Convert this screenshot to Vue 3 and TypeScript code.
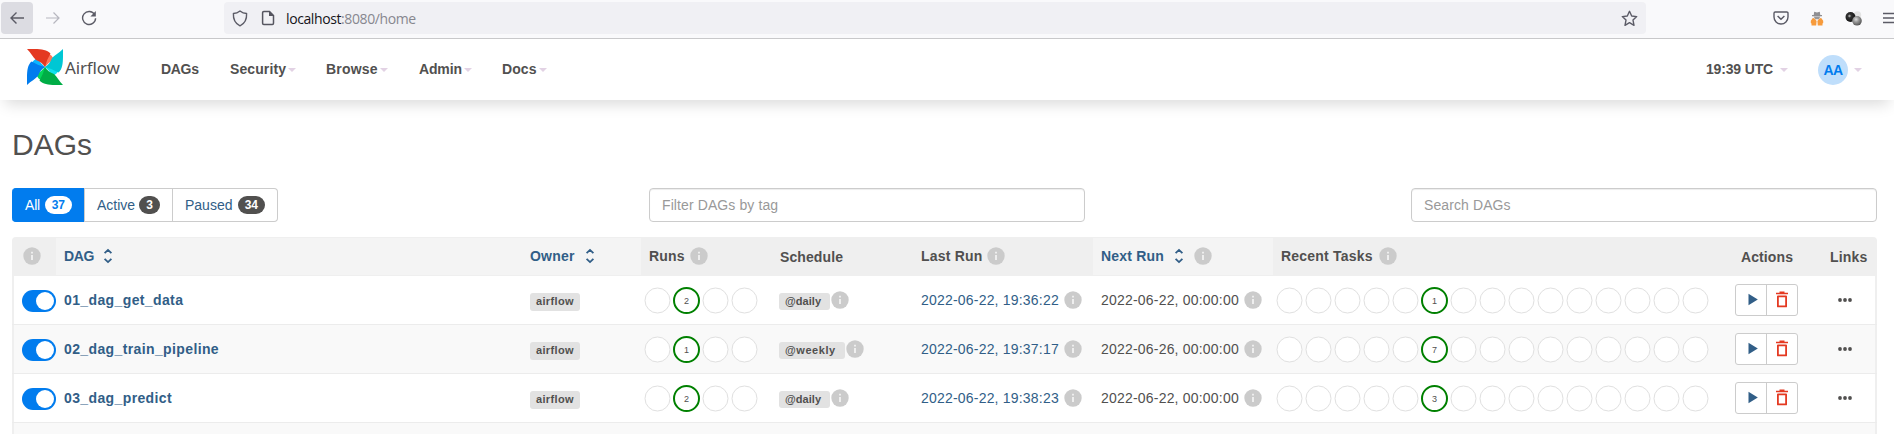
<script setup lang="ts">
import { defineComponent, h } from 'vue'

interface Dag {
  name: string
  runs: number
  schedule: string
  last: string
  next: string
  tasks: number
}

interface Blade {
  angle: number
  dark: string
  light: string
}

const dags: Dag[] = [
  { name: '01_dag_get_data', runs: 2, schedule: 'daily', last: '2022-06-22, 19:36:22', next: '2022-06-22, 00:00:00', tasks: 1 },
  { name: '02_dag_train_pipeline', runs: 1, schedule: 'weekly', last: '2022-06-22, 19:37:17', next: '2022-06-26, 00:00:00', tasks: 7 },
  { name: '03_dag_predict', runs: 2, schedule: 'daily', last: '2022-06-22, 19:38:23', next: '2022-06-22, 00:00:00', tasks: 3 },
]

const menus: string[] = ['Security', 'Browse', 'Admin', 'Docs']

const blades: Blade[] = [
  { angle: 0, dark: '#e43921', light: '#ff7557' },
  { angle: 90, dark: '#00c7d4', light: '#11e1ee' },
  { angle: 180, dark: '#00ad46', light: '#04d659' },
  { angle: 270, dark: '#017cee', light: '#0cb6ff' },
]

const InfoIcon = defineComponent({
  render: () =>
    h('svg', { width: 18, height: 18, viewBox: '0 0 18 18', style: 'display:block;flex:none' }, [
      h('circle', { cx: 9, cy: 9, r: 8.7, fill: '#cbcbcb' }),
      h('path', { d: 'M8.1 4.8h1.8v1.8H8.1zM8.1 8h1.8v5H8.1z', fill: '#f2f2f2' }),
    ]),
})

const SortIcon = defineComponent({
  render: () =>
    h('svg', { width: 10, height: 16, viewBox: '0 0 10 16', style: 'display:block;flex:none' }, [
      h('path', { d: 'M1.6 5.2 5 1.9l3.4 3.3M1.6 10.8 5 14.1l3.4-3.3', fill: 'none', stroke: '#315e87', 'stroke-width': 1.8 }),
    ]),
})
</script>

<template>
  <div class="page">
    <div class="browser">
      <div class="back">
        <svg width="16" height="16" viewBox="0 0 16 16"><path d="M15 8H2M7.500 2.500 2 8l5.500 5.500" fill="none" stroke="#5b5b66" stroke-width="1.400" /></svg>
      </div>
      <svg class="fwd" width="16" height="16" viewBox="0 0 16 16"><path d="M1 8h13M8.500 2.500 14 8l-5.500 5.500" fill="none" stroke="#b7b7bf" stroke-width="1.200" /></svg>
      <svg class="reload" width="16" height="16" viewBox="0 0 16 16"><path d="M13.600 4.500A6.500 6.500 0 1 0 14.600 8.200" fill="none" stroke="#5b5b66" stroke-width="1.400" /><path d="M14.800 1v5.400H9.400z" fill="#5b5b66" /></svg>
      <div class="url">
        <svg width="16" height="17" viewBox="0 0 16 17"><path d="M8 1C6 2.600 3.700 3.400 1.400 3.500 1.100 9 3.500 13.700 8 15.800c4.500-2.100 6.900-6.800 6.600-12.300C12.300 3.400 10 2.600 8 1z" fill="none" stroke="#5b5b66" stroke-width="1.400" stroke-linejoin="round" /></svg>
        <svg class="doc" width="14" height="16" viewBox="0 0 14 16"><path d="M2.800 1.500h5.700L12.500 5.500v7.800a1.200 1.200 0 0 1-1.200 1.200H2.800a1.200 1.200 0 0 1-1.200-1.200V2.700a1.200 1.200 0 0 1 1.200-1.200z" fill="none" stroke="#55555f" stroke-width="1.500" /><path d="M8 1v5h5z" fill="#55555f" /></svg>
        <span class="address"><b>localhost</b>:8080/home</span>
        <svg class="star" width="17" height="17" viewBox="0 0 17 17"><path d="m8.500 1.300 2.200 4.700 5 .6-3.700 3.500 1 5.200-4.500-2.600L4 15.300l1-5.200L1.300 6.600l5-.6z" fill="none" stroke="#5b5b66" stroke-width="1.400" stroke-linejoin="round" /></svg>
      </div>
      <div class="extensions">
        <svg width="16" height="14" viewBox="0 0 16 14"><path d="M2.200 1h11.600a1.200 1.200 0 0 1 1.200 1.200V6A7 7 0 0 1 1 6V2.200A1.200 1.200 0 0 1 2.200 1z" fill="none" stroke="#5b5b66" stroke-width="1.400" /><path d="M4.600 5 8 8.200 11.400 5" fill="none" stroke="#5b5b66" stroke-width="1.500" /></svg>
        <svg width="14" height="15" viewBox="0 0 14 15"><path d="M4.200.8 7 1.400 9.800.8l.5 3.200H12v1.300H2V4h1.700z" fill="#8f8f92" /><path d="M3.700 5.500h6.600L9 8.300H5z" fill="#99999b" /><path d="M3 6.800 5 8l1.600 2L6.200 14.500H1.500v-2L.8 12v-2.200zM11 6.800 9 8l-1.600 2 .4 4.500h4.700v-2l.7-.5v-2.200z" fill="#f79b3c" /></svg>
        <svg width="17" height="15" viewBox="0 0 17 15">
          <defs>
            <radialGradient id="ballDark" cx=".4" cy=".4" r=".6"><stop offset="0" stop-color="#ccc" /><stop offset=".3" stop-color="#333" /><stop offset="1" stop-color="#111" /></radialGradient>
            <radialGradient id="ballGray" cx=".4" cy=".35" r=".7"><stop offset="0" stop-color="#ddd" /><stop offset=".4" stop-color="#999" /><stop offset="1" stop-color="#4c4c4c" /></radialGradient>
          </defs>
          <circle cx="12.500" cy="4" r="3.700" fill="#e4e4e4" /><circle cx="5.500" cy="6" r="5" fill="url(#ballDark)" /><circle cx="12" cy="9.800" r="4.800" fill="url(#ballGray)" />
        </svg>
        <svg width="16" height="12" viewBox="0 0 16 12"><path d="M0 1.500h16M0 6h16M0 10.500h16" stroke="#5b5b66" stroke-width="1.300" /></svg>
      </div>
    </div>

    <nav class="navbar">
      <svg class="logo" width="36" height="36" viewBox="-18 -18 36 36">
        <g v-for="b in blades" :key="b.angle" :transform="`rotate(${b.angle})`">
          <path d="M2-14Q8-12 8.500-7Q4-5 0 0L-2-6z" :fill="b.light" />
        </g>
        <g v-for="b in blades" :key="b.dark" :transform="`rotate(${b.angle})`">
          <path d="M-18-18C-7-18 1-18.500 5.500-13.500Q2-8 0 0Q-3-5-9-7C-12-9.500-14-14-18-18z" :fill="b.dark" />
        </g>
      </svg>
      <span class="brand">Airflow</span>
      <div class="menu">
        <a class="item dags">DAGs</a>
        <a v-for="m in menus" :key="m" class="item" :class="m.toLowerCase()">{{ m }}<i class="caret" /></a>
      </div>
      <a class="item clock">19:39 UTC<i class="caret" /></a>
      <a class="item user"><span class="avatar">AA</span><i class="caret" /></a>
    </nav>

    <main>
      <h2>DAGs</h2>
      <div class="filters">
        <div class="group">
          <a class="all">All<span class="badge">37</span></a>
          <a class="active">Active<span class="badge">3</span></a>
          <a class="paused">Paused<span class="badge">34</span></a>
        </div>
        <input class="tags" type="text" placeholder="Filter DAGs by tag">
        <input class="search" type="text" placeholder="Search DAGs">
      </div>

      <div class="table">
        <div class="row head">
          <div class="c-info"><InfoIcon /></div>
          <div class="sortable"><span class="t-dag">DAG</span><SortIcon /></div>
          <div class="sortable"><span class="t-owner">Owner</span><SortIcon /></div>
          <div><span class="t-runs">Runs</span><InfoIcon /></div>
          <div class="low t-schedule">Schedule</div>
          <div><span class="t-last">Last Run</span><InfoIcon /></div>
          <div class="sortable"><span class="t-next">Next Run</span><SortIcon /><span class="gap" /><InfoIcon /></div>
          <div><span class="t-recent">Recent Tasks</span><InfoIcon /></div>
          <div class="low c-actions">Actions</div>
          <div class="low">Links</div>
        </div>
        <div v-for="d in dags" :key="d.name" class="row body">
          <div class="c-toggle"><span class="toggle"><i /></span></div>
          <div class="name">{{ d.name }}</div>
          <div><span class="label owner">airflow</span></div>
          <div class="c-circles">
            <svg width="118" height="29" viewBox="0 0 118 29">
              <circle v-for="i in 4" :key="i" :cx="i * 29 - 14.5" cy="14.500" r="12.500" :class="i === 2 ? 'done' : 'none'" />
              <text x="43.500" y="17.700">{{ d.runs }}</text>
            </svg>
          </div>
          <div class="c-schedule"><span class="label sched" :class="d.schedule">@{{ d.schedule }}</span><InfoIcon /></div>
          <div class="date link"><span>{{ d.last }}</span><InfoIcon /></div>
          <div class="date"><span>{{ d.next }}</span><InfoIcon /></div>
          <div class="c-circles tasks">
            <svg width="436" height="29" viewBox="0 0 436 29">
              <circle v-for="i in 15" :key="i" :cx="i * 29 - 14.5" cy="14.500" r="12.500" :class="i === 6 ? 'done' : 'none'" />
              <text x="159.500" y="17.700">{{ d.tasks }}</text>
            </svg>
          </div>
          <div class="c-buttons">
            <span class="actions">
              <a><svg width="10" height="13" viewBox="0 0 10 13"><path d="M.5.800v11.400L9.800 6.500z" fill="#315e87" /></svg></a>
              <a><svg width="14" height="17" viewBox="0 0 14 17"><path d="M1 2.400h12M4.500 1.300h5" fill="none" stroke="#e43921" stroke-width="1.500" /><path d="M2.900 5.400h8.200v10H2.900z" fill="none" stroke="#e43921" stroke-width="1.800" stroke-linejoin="round" /></svg></a>
            </span>
          </div>
          <div class="c-links"><svg width="16" height="6" viewBox="0 0 16 6"><g fill="#51504f"><circle cx="3" cy="3" r="1.900" /><circle cx="8" cy="3" r="1.900" /><circle cx="13" cy="3" r="1.900" /></g></svg></div>
        </div>
        <div class="row body" />
      </div>
    </main>
  </div>
</template>

<style>
body { margin: 0; overflow: hidden; }
</style>

<style scoped>
.page { width: 1894px; height: 434px; overflow: hidden; background: #fff; color: #51504f; font: 14px/20px "Liberation Sans", Arial, sans-serif; }
.page * { box-sizing: border-box; }
svg { display: block; flex: none; }

.browser { height: 39px; background: #f9f9fb; border-bottom: 1px solid #c8c8ca; display: flex; align-items: center; padding: 0 0 2px 1px; overflow: hidden; }
.back { width: 32px; height: 32px; border-radius: 4px; background: #dcdce2; display: flex; align-items: center; justify-content: center; flex: none; }
.fwd { margin-left: 12px; }
.reload { margin: 0 127px 0 20px; }
.url { width: 1422px; height: 32px; border-radius: 4px; background: #f0f0f4; display: flex; align-items: center; padding-left: 8px; flex: none; }
.address { margin: 2px 0 0 11px; font: 14px/20px "Open Sans", "Noto Sans", sans-serif; color: #87878f; letter-spacing: -0.4px; }
.address b { font-weight: 400; color: #15141a; }
.doc { margin-left: 13px; }
.star { margin-left: auto; margin-right: 8px; }
.extensions { display: flex; align-items: center; margin-left: 127px; gap: 21px; flex: none; }

.navbar { position: relative; height: 61px; background: #fff; display: flex; align-items: center; box-shadow: 0 9px 14px -5px rgba(0, 0, 0, 0.15); }
.logo { margin: -5px 0 0 27px; }
.brand { width: 97px; margin: -4px 0 0 2px; font: 17px/24px "Noto Sans", sans-serif; letter-spacing: -0.15px; }
.menu { display: grid; grid-template-columns: 69px 96px 93px 83px 60px; margin-left: -1px; }
.item { display: flex; align-items: center; font-weight: 700; letter-spacing: 0.1px; white-space: nowrap; margin-top: -1px; }
.dags { letter-spacing: -0.3px; }
.admin { letter-spacing: -0.15px; }
.browse { letter-spacing: 0.2px; }
.caret { width: 0; height: 0; margin: 2px 0 0 2px; border: 4px solid transparent; border-top-color: #e2d2e4; border-bottom: 0; }
.clock { margin-left: auto; letter-spacing: -0.15px; }
.clock .caret { margin-left: 7px; }
.user { margin: 0 32px 0 30px; letter-spacing: -0.7px; }
.avatar { width: 30px; height: 30px; border-radius: 50%; background: #bfdefb; color: #017cee; text-align: center; line-height: 30px; }
.user .caret { margin: 0 0 0 6px; }

main { padding: 0 17px 0 12px; }
h2 { margin: 28px 0 0; font-size: 30px; line-height: 33px; font-weight: 400; }
.filters { display: flex; margin-top: 27px; height: 34px; }
.group { display: flex; width: 637px; }
.group a { display: flex; align-items: center; justify-content: space-between; border: 1px solid #ccc; border-left: 0; color: #315e87; padding: 0 12px; }
.group .all { width: 72px; background: #017cee; border-color: #017cee; color: #fff; border-radius: 4px 0 0 4px; padding: 0 11px 0 13px; letter-spacing: -0.2px; }
.group .active { width: 89px; border-left: 1px solid #ccc; }
.group .paused { width: 105px; border-radius: 0 4px 4px 0; }
.badge { height: 18px; border-radius: 9px; padding: 0 7px; background: #51504f; color: #fff; font-size: 12px; line-height: 18px; font-weight: 700; letter-spacing: 0; }
.all .badge { background: #fff; color: #017cee; }
input { height: 34px; border: 1px solid #ccc; border-radius: 4px; padding: 0 12px; font: inherit; letter-spacing: 0.1px; box-shadow: inset 0 1px 1px rgba(0, 0, 0, 0.075); background: #fff; outline: 0; }
input::placeholder { color: #999; opacity: 1; }
.tags { width: 436px; }
.search { width: 466px; margin-left: auto; }

.table { margin-top: 15px; }
.row { display: grid; grid-template-columns: 44px 466px 119px 131px 141px 180px 180px 458px 91px 55px; height: 49px; }
.row > div { display: flex; align-items: center; padding-left: 8px; white-space: nowrap; }
.head { height: 39px; background: #efefef; border-radius: 4px 4px 0 0; font-weight: 700; letter-spacing: 0.2px; }
.head > div { padding-bottom: 1px; }
.head .low { padding-top: 1px; padding-bottom: 0; }
.head .sortable { background: #f4f4f4; color: #315e87; border: solid #efefef; border-width: 1px 0; }
.row .c-info { padding-left: 11px; }
.t-dag { width: 39px; letter-spacing: -0.3px; }
.t-owner { width: 55px; }
.t-runs { width: 41px; }
.t-schedule { letter-spacing: 0.1px; }
.t-last { width: 66px; }
.t-next { width: 73px; }
.t-recent { width: 98px; }
.gap { width: 10px; }
.head .c-actions { padding-left: 10px; letter-spacing: 0.1px; }

.body { border-bottom: 1px solid #ececec; box-shadow: inset 2px 0 #efefef, inset -2px 0 #efefef; background: #fff; }
.body:nth-child(odd) { background: #f9f9f9; }
.row .c-toggle { padding: 2px 0 0 10px; }
.toggle { width: 34px; height: 22px; border-radius: 11px; background: #017cee; padding: 2px; display: flex; justify-content: flex-end; }
.toggle i { width: 18px; height: 18px; border-radius: 50%; background: #fff; }
.name { font-weight: 700; color: #315e87; letter-spacing: 0.38px; }
.label { background: #e2e2e2; border-radius: 3px; font-size: 11px; font-weight: 700; letter-spacing: 0.35px; padding: 0 6px; height: 18px; line-height: 17px; }
.owner { margin-top: 4px; width: 50px; }
.row .c-schedule { padding-left: 7px; }
.sched { height: 17px; margin: 3px 1px 0 0; }
.daily { width: 51px; letter-spacing: 0.05px; }
.weekly { width: 66px; letter-spacing: 0.55px; }
.row .c-circles { padding: 1px 0 0 1.500px; }
.row .tasks { padding-left: 2px; }
.none { fill: #fff; stroke: #e0e0e0; stroke-width: 1; }
.done { fill: #fff; stroke: #008000; stroke-width: 2; }
text { font-size: 9px; text-anchor: middle; fill: #51504f; }
.date { letter-spacing: 0.2px; }
.date span { width: 143px; }
.link { color: #315e87; }
.row .c-buttons { padding: 0 0 0 4px; }
.actions { display: flex; width: 63px; height: 32px; border: 1px solid #ccc; border-radius: 3px; background: #fff; }
.actions a { width: 31px; display: flex; align-items: center; justify-content: center; padding-bottom: 2px; }
.actions a:first-child { padding-left: 4px; border-right: 1px solid #ccc; }
.row .c-links { padding: 0 0 0 15px; }
</style>
